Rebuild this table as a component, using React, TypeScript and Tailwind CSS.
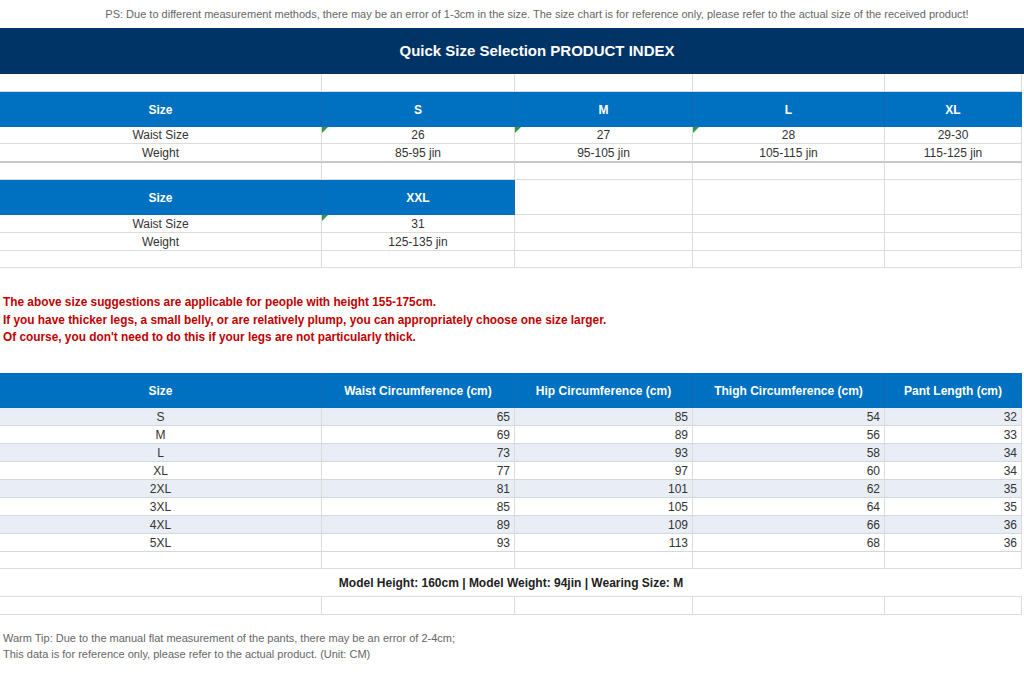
import React from "react";

const cols = "grid grid-cols-[322px_193px_178px_192px_137px]";

function Corner() {
  // little green comment marker in the top-left of a cell
  return (
    <span className="absolute left-0 top-0 h-0 w-0 border-r-[6px] border-t-[6px] border-r-transparent border-t-[#2f9a3c]" />
  );
}

function Cell({
  children,
  h,
  mark,
  align = "center",
  className = "",
}: {
  children?: React.ReactNode;
  h: string;
  mark?: boolean;
  align?: "center" | "right";
  className?: string;
}) {
  return (
    <div
      className={`relative flex items-center border-r border-b border-[#dcdcdc] text-[12px] text-[#333] ${h} ${
        align === "right" ? "justify-end pr-[4px]" : "justify-center"
      } ${className}`}
    >
      {mark && <Corner />}
      {children}
    </div>
  );
}

function EmptyRow({ h }: { h: string }) {
  return (
    <div className={cols}>
      {[0, 1, 2, 3, 4].map((i) => (
        <Cell key={i} h={h} />
      ))}
    </div>
  );
}

function HeadCell({ children }: { children?: React.ReactNode }) {
  return (
    <div className="flex h-[35px] items-center justify-center border-r border-[#1566b0] bg-[#0070c0] text-[12px] font-bold text-white">
      {children}
    </div>
  );
}

const quick = [
  { size: "S", waist: "26", weight: "85-95 jin", mark: true },
  { size: "M", waist: "27", weight: "95-105 jin", mark: true },
  { size: "L", waist: "28", weight: "105-115 jin", mark: true },
  { size: "XL", waist: "29-30", weight: "115-125 jin", mark: false },
];

const measures = [
  ["S", "65", "85", "54", "32"],
  ["M", "69", "89", "56", "33"],
  ["L", "73", "93", "58", "34"],
  ["XL", "77", "97", "60", "34"],
  ["2XL", "81", "101", "62", "35"],
  ["3XL", "85", "105", "64", "35"],
  ["4XL", "89", "109", "66", "36"],
  ["5XL", "93", "113", "68", "36"],
];

export default function App() {
  return (
    <div className="h-[675px] w-[1024px] overflow-hidden bg-white font-['Liberation_Sans',Arial,sans-serif]">
      <div className="flex h-[28px] items-center justify-center pl-[50px] text-[11px] text-[#666]">
        PS: Due to different measurement methods, there may be an error of 1-3cm in the size. The size chart is for
        reference only, please refer to the actual size of the received product!
      </div>

      <div className="flex h-[46px] items-center justify-center bg-[#003366] pl-[50px] text-[15px] font-bold text-white">
        Quick Size Selection PRODUCT INDEX
      </div>

      <div className="w-[1022px]">
        <EmptyRow h="h-[18px]" />

        <div className={cols}>
          <HeadCell>Size</HeadCell>
          {quick.map((q) => (
            <HeadCell key={q.size}>{q.size}</HeadCell>
          ))}
        </div>
        <div className={cols}>
          <Cell h="h-[17px]">Waist Size</Cell>
          {quick.map((q) => (
            <Cell key={q.size} h="h-[17px]" mark={q.mark}>
              {q.waist}
            </Cell>
          ))}
        </div>
        <div className={cols}>
          <Cell h="h-[19px]" className="border-b-2 border-b-[#c8c8c8]">
            Weight
          </Cell>
          {quick.map((q) => (
            <Cell key={q.size} h="h-[19px]" className="border-b-2 border-b-[#c8c8c8]">
              {q.weight}
            </Cell>
          ))}
        </div>
        <EmptyRow h="h-[17px]" />

        <div className={cols}>
          <HeadCell>Size</HeadCell>
          <HeadCell>XXL</HeadCell>
          <Cell h="h-[35px]" />
          <Cell h="h-[35px]" />
          <Cell h="h-[35px]" />
        </div>
        <div className={cols}>
          <Cell h="h-[18px]">Waist Size</Cell>
          <Cell h="h-[18px]" mark>
            31
          </Cell>
          <Cell h="h-[18px]" />
          <Cell h="h-[18px]" />
          <Cell h="h-[18px]" />
        </div>
        <div className={cols}>
          <Cell h="h-[18px]">Weight</Cell>
          <Cell h="h-[18px]">125-135 jin</Cell>
          <Cell h="h-[18px]" />
          <Cell h="h-[18px]" />
          <Cell h="h-[18px]" />
        </div>
        <EmptyRow h="h-[17px]" />
      </div>

      <div className="h-[105px] pl-[3px] pt-[26px] text-[11.85px] font-bold leading-[17.5px] text-[#c00000]">
        <p>The above size suggestions are applicable for people with height 155-175cm.</p>
        <p>If you have thicker legs, a small belly, or are relatively plump, you can appropriately choose one size larger.</p>
        <p>Of course, you don't need to do this if your legs are not particularly thick.</p>
      </div>

      <div className="w-[1022px]">
        <div className={cols}>
          <HeadCell>Size</HeadCell>
          <HeadCell>Waist Circumference (cm)</HeadCell>
          <HeadCell>Hip Circumference (cm)</HeadCell>
          <HeadCell>Thigh Circumference (cm)</HeadCell>
          <HeadCell>Pant Length (cm)</HeadCell>
        </div>
        {measures.map((row, i) => (
          <div key={row[0]} className={`${cols} ${i % 2 === 0 ? "bg-[#e9eef6]" : "bg-white"}`}>
            <Cell h="h-[18px]" className="border-b-[#d3d8de]">
              {row[0]}
            </Cell>
            {row.slice(1).map((v, j) => (
              <Cell key={j} h="h-[18px]" align="right" className="border-b-[#d3d8de]">
                {v}
              </Cell>
            ))}
          </div>
        ))}
        <EmptyRow h="h-[17px]" />
        <div className="flex h-[28px] items-center justify-center border-b border-[#dcdcdc] text-[12px] font-bold text-[#222]">
          Model Height: 160cm | Model Weight: 94jin | Wearing Size: M
        </div>
        <EmptyRow h="h-[18px]" />
      </div>

      <div className="pl-[3px] pt-[15px] text-[11px] leading-[16px] text-[#666]">
        <p>Warm Tip: Due to the manual flat measurement of the pants, there may be an error of 2-4cm;</p>
        <p>This data is for reference only, please refer to the actual product. (Unit: CM)</p>
      </div>
    </div>
  );
}
